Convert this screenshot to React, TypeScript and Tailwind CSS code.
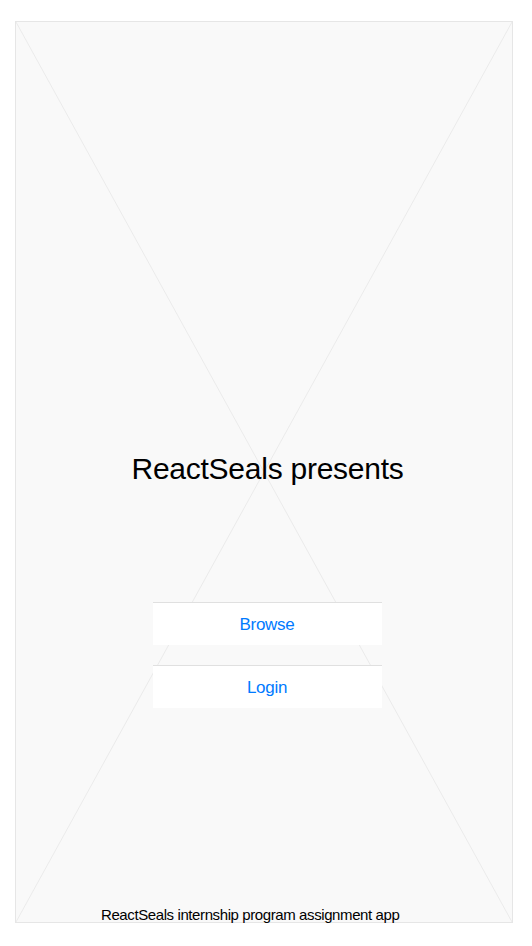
export default function App() {
  return (
    <div className="min-h-[946px] bg-white pt-[21px] pl-[15px] font-['Liberation_Sans',Arial,sans-serif]">
      <div className="relative flex h-[902px] w-[498px] flex-col items-center border border-[#e6e6e6] bg-[#f9f9f9]">
        <svg className="absolute inset-0 h-full w-full" preserveAspectRatio="none" viewBox="0 0 100 100">
          <line x1="0" y1="0" x2="100" y2="100" stroke="#ebebeb" strokeWidth="1" vectorEffect="non-scaling-stroke" />
          <line x1="100" y1="0" x2="0" y2="100" stroke="#ebebeb" strokeWidth="1" vectorEffect="non-scaling-stroke" />
        </svg>

        <h1 className="relative mt-[429px] ml-[7px] text-[30px] leading-[36px] tracking-[-0.25px] text-black">
          ReactSeals presents
        </h1>

        <div className="relative mt-[115px] ml-[6px] flex flex-col gap-5">
          <button className="h-[43px] w-[229px] border-t border-[#e0e0e0] bg-white pt-[1px] text-[17px] tracking-[-0.3px] text-[#007aff]">
            Browse
          </button>
          <button className="h-[43px] w-[229px] border-t border-[#e0e0e0] bg-white pt-[1px] text-[17px] tracking-[-0.3px] text-[#007aff]">
            Login
          </button>
        </div>

        <p className="relative mt-auto -mb-[2px] ml-[85px] self-start text-[15px] leading-[18px] tracking-[-0.4px] text-black">
          ReactSeals internship program assignment app
        </p>
      </div>
    </div>
  )
}
